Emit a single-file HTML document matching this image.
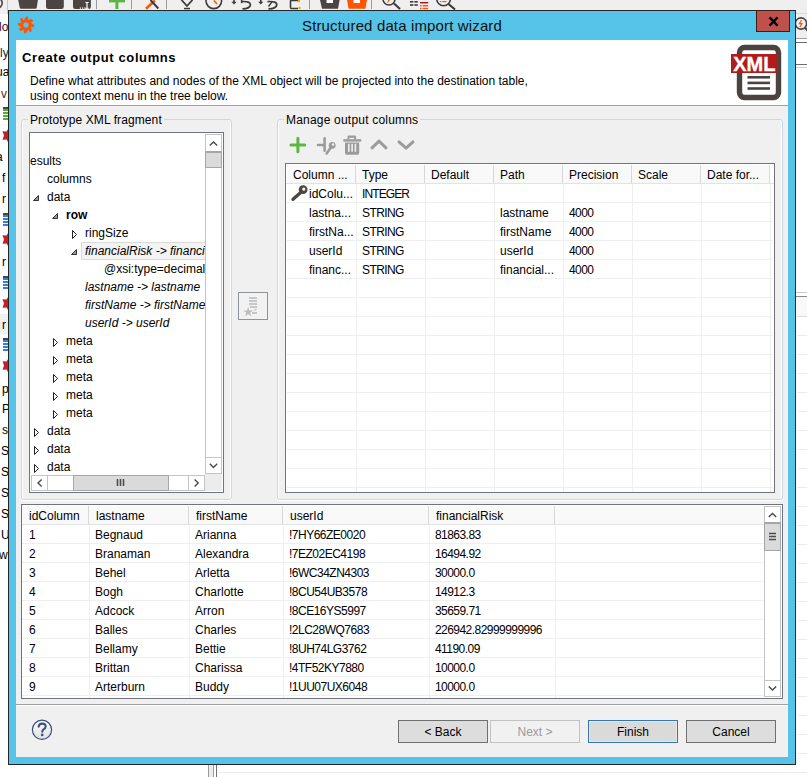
<!DOCTYPE html>
<html><head><meta charset="utf-8">
<style>
*{box-sizing:border-box}
html,body{margin:0;padding:0}
body{width:807px;height:777px;position:relative;overflow:hidden;background:#fff;font-family:"Liberation Sans",sans-serif;font-size:12px;color:#000}
.a{position:absolute}
.t{position:absolute;line-height:18px;white-space:nowrap}
.hl{position:absolute;height:1px}
.vl{position:absolute;width:1px}
</style></head><body>
<!-- background app -->
<div class="a" style="left:0;top:0;width:807px;height:14px;background:#efefef"></div>
<svg class="a" style="left:0;top:0" width="807" height="14">
<circle cx="-3" cy="3" r="5.2" fill="none" stroke="#4b4440" stroke-width="1.6"/>
<rect x="7" y="0" width="1" height="14" fill="#c9c9c9"/>
<path d="M18.2 0H37.9L36.8 7.5Q36.6 8.8 35.3 8.8H21.2Q19.9 8.8 19.7 7.5Z" fill="#4b4440"/>
<path d="M46 0H63.8V6.8Q63.8 9 61.6 9H48.2Q46 9 46 6.8Z" fill="#4b4440"/>
<path d="M73 0H90.9V6.8Q90.9 9 88.7 9H75.2Q73 9 73 6.8Z" fill="#4b4440"/>
<g fill="#fff"><rect x="79.8" y="7.5" width="1.2" height="1.2"/><rect x="82" y="7.5" width="1.2" height="1.2"/><rect x="84.2" y="7.5" width="1.2" height="1.2"/><rect x="86.4" y="2" width="1.2" height="6.5"/><rect x="85.4" y="2" width="3.2" height="1"/><rect x="85.4" y="7.8" width="3.2" height="1"/></g>
<rect x="96" y="0" width="1" height="9" fill="#9a9a9a"/>
<path d="M109 0H125V2.4H109Z" fill="#5cb545"/><rect x="115.4" y="0" width="3" height="9" fill="#5cb545"/>
<rect x="131" y="0" width="1" height="9" fill="#9a9a9a"/>
<path d="M146 8.8L154.8 0.5" stroke="#ff5500" stroke-width="2.6"/><path d="M150.5 0L158.3 8.5" stroke="#3b3b3b" stroke-width="2"/>
<rect x="166" y="0" width="1" height="9" fill="#9a9a9a"/>
<path d="M181.5 0L187 6L192.5 0" fill="none" stroke="#3b3b3b" stroke-width="1.8"/><rect x="184" y="7.8" width="6" height="1.5" fill="#3b3b3b"/>
<circle cx="213.8" cy="0.8" r="7.8" fill="none" stroke="#3b3b3b" stroke-width="1.6"/><path d="M213.8 0.5L217 4" stroke="#ff5500" stroke-width="1.6"/>
<path d="M234 0V2.5" stroke="#3b3b3b" stroke-width="1.6"/><path d="M231.4 1.8H236.6L234 4.6Z" fill="#3b3b3b"/><path d="M241.5 1.6Q250.6 1 250.4 4.8Q250 8.6 242.5 8.8" fill="none" stroke="#3b3b3b" stroke-width="1.7"/><path d="M241.6 0V3.2" stroke="#3b3b3b" stroke-width="1.5"/>
<path d="M260.8 0V2.5" stroke="#3b3b3b" stroke-width="1.6"/><path d="M258.2 1.8H263.4L260.8 4.6Z" fill="#3b3b3b"/><path d="M267.5 1.6Q277 1 276.8 4.8Q276.4 8.6 268.5 8.8" fill="none" stroke="#3b3b3b" stroke-width="1.7"/><path d="M272 1.8L268.5 6.5" stroke="#3b3b3b" stroke-width="1.4"/>
<path d="M298 0.5H291.5Q290.5 0.5 290.5 1.5V7.5Q290.5 8.5 291.5 8.5H298" fill="none" stroke="#3b3b3b" stroke-width="1.6"/><circle cx="299" cy="1" r="1.2" fill="#f0a000"/><circle cx="299.5" cy="8" r="1.2" fill="#f0a000"/>
<rect x="309" y="0" width="1" height="9" fill="#9a9a9a"/>
<path d="M320 0H339.6L338 8.8H322Z" fill="#4b4440"/><rect x="326.5" y="0" width="6.5" height="3" fill="#fff"/>
<path d="M347 0H367L365.4 8.8H348.6Z" fill="#ff5500"/><rect x="353.5" y="0" width="6.5" height="3" fill="#fff"/>
<rect x="371" y="0" width="1" height="9" fill="#9a9a9a"/>
<circle cx="389" cy="-1" r="6" fill="none" stroke="#3b3b3b" stroke-width="1.6"/><path d="M387.5 2.5L390 -1" stroke="#ff5500" stroke-width="1.2"/><path d="M394 3.5L400 9" stroke="#3b3b3b" stroke-width="2.2"/>
<g fill="#3b3b3b"><rect x="410" y="1" width="3.4" height="1.6"/><rect x="414.4" y="1" width="3.4" height="1.6"/><rect x="410" y="4.2" width="3.4" height="1.6"/><rect x="414.4" y="4.2" width="3.4" height="1.6"/></g>
<rect x="420" y="2" width="8.2" height="1.4" fill="#a01010"/><g fill="#ff5500"><rect x="420" y="5" width="1.6" height="1.4"/><rect x="422.6" y="5" width="5.6" height="1.4"/><rect x="420" y="7.8" width="1.6" height="1.4"/><rect x="422.6" y="7.8" width="5.6" height="1.4"/></g>
<circle cx="443.6" cy="-1" r="6.8" fill="none" stroke="#3b3b3b" stroke-width="1.6"/><g fill="#ff5500"><rect x="440" y="1" width="1.4" height="1.2"/><rect x="442.4" y="1" width="4" height="1.2"/></g><path d="M448.5 4L455 9.5" stroke="#3b3b3b" stroke-width="2.2"/>
</svg>
<div class="a" style="left:796px;top:14px;width:11px;height:751px;background:#fff"></div>
<div class="a" style="left:796px;top:13px;width:11px;height:1px;background:#dadada"></div>
<div class="a" style="left:796px;top:14px;width:11px;height:24px;background:#efefef"></div>
<svg class="a" style="left:796px;top:14px" width="11" height="24"><circle cx="5" cy="9.5" r="5.6" fill="#f4f4f4" stroke="#4b4440" stroke-width="1.6"/><path d="M5.7 6L3.3 9.7H5.9L3.9 13.1" fill="none" stroke="#ff5500" stroke-width="1.2"/><path d="M8.8 13.6L12 17" stroke="#4b4440" stroke-width="2.2"/></svg>
<div class="a" style="left:796px;top:38px;width:11px;height:1px;background:#a0a0a0"></div>
<div class="a" style="left:796px;top:42px;width:11px;height:1px;background:#6d6d6d"></div>
<div class="a" style="left:796px;top:64px;width:11px;height:1px;background:#6d6d6d"></div>
<div class="a" style="left:796px;top:67px;width:11px;height:1px;background:#c8d0d8"></div>
<div class="a" style="left:796px;top:292px;width:11px;height:1px;background:#c8c8c8"></div>
<div class="a" style="left:796px;top:296px;width:11px;height:1px;background:#8a8a8a"></div>
<div class="a" style="left:796px;top:297px;width:11px;height:19px;background:#f9f9f9"></div>
<div class="a" style="left:797px;top:316px;width:10px;height:1px;background:#dcdcdc"></div>
<div class="a" style="left:797px;top:335px;width:10px;height:1px;background:#ececec"></div>
<div class="a" style="left:797px;top:354px;width:10px;height:1px;background:#ececec"></div>
<div class="a" style="left:797px;top:373px;width:10px;height:1px;background:#ececec"></div>
<div class="a" style="left:797px;top:392px;width:10px;height:1px;background:#ececec"></div>
<div class="a" style="left:797px;top:411px;width:10px;height:1px;background:#ececec"></div>
<div class="a" style="left:797px;top:430px;width:10px;height:1px;background:#ececec"></div>
<div class="a" style="left:797px;top:449px;width:10px;height:1px;background:#ececec"></div>
<div class="a" style="left:797px;top:468px;width:10px;height:1px;background:#ececec"></div>
<div class="a" style="left:797px;top:487px;width:10px;height:1px;background:#ececec"></div>
<div class="a" style="left:797px;top:506px;width:10px;height:1px;background:#ececec"></div>
<div class="a" style="left:797px;top:525px;width:10px;height:1px;background:#ececec"></div>
<div class="a" style="left:797px;top:544px;width:10px;height:1px;background:#ececec"></div>
<div class="a" style="left:797px;top:563px;width:10px;height:1px;background:#ececec"></div>
<div class="a" style="left:797px;top:582px;width:10px;height:1px;background:#ececec"></div>
<div class="a" style="left:797px;top:601px;width:10px;height:1px;background:#ececec"></div>
<div class="a" style="left:797px;top:620px;width:10px;height:1px;background:#ececec"></div>
<div class="a" style="left:797px;top:639px;width:10px;height:1px;background:#ececec"></div>
<div class="a" style="left:797px;top:658px;width:10px;height:1px;background:#ececec"></div>
<div class="a" style="left:797px;top:677px;width:10px;height:1px;background:#ececec"></div>
<div class="a" style="left:797px;top:696px;width:10px;height:1px;background:#ececec"></div>
<div class="a" style="left:797px;top:715px;width:10px;height:1px;background:#ececec"></div>
<div class="a" style="left:797px;top:734px;width:10px;height:1px;background:#ececec"></div>
<div class="a" style="left:797px;top:753px;width:10px;height:1px;background:#ececec"></div>
<div class="a" style="left:797px;top:772px;width:10px;height:1px;background:#ececec"></div>
<div class="a" style="left:208px;top:765px;width:1px;height:12px;background:#9a9a9a"></div>
<div class="a" style="left:209px;top:765px;width:4px;height:12px;background:#ececec"></div>
<div class="a" style="left:213px;top:765px;width:1px;height:12px;background:#9a9a9a"></div>
<div class="a" style="left:216px;top:765px;width:1px;height:12px;background:#6f737a"></div>
<div class="a" style="left:218px;top:772px;width:589px;height:1px;background:#ececec"></div>
<div class="a" style="left:0;top:314px;width:8px;height:20px;background:#f0f0f0"></div>
<div class="a" style="left:0;top:14px;width:8px;height:751px;overflow:hidden"><div class="t" style="left:-1px;top:4px;color:#3a0a2a">lo</div><div class="t" style="left:0px;top:30px;color:#1a1a4a">ly</div><div class="t" style="left:-4px;top:49px;color:#000">ua</div><div class="t" style="left:1px;top:71px;color:#5a2a00">v</div><div class="t" style="left:-4px;top:134px;color:#000">a</div><div class="t" style="left:2px;top:155px;color:#000">f</div><div class="t" style="left:2px;top:176px;color:#000">r</div><div class="t" style="left:2px;top:239px;color:#000">r</div><div class="t" style="left:2px;top:302px;color:#000">r</div><div class="t" style="left:2px;top:366px;color:#000">p</div><div class="t" style="left:2px;top:386px;color:#000">P</div><div class="t" style="left:2px;top:407px;color:#000">s</div><div class="t" style="left:1px;top:428px;color:#000">S</div><div class="t" style="left:1px;top:449px;color:#000">S</div><div class="t" style="left:1px;top:470px;color:#000">S</div><div class="t" style="left:1px;top:491px;color:#000">S</div><div class="t" style="left:1px;top:512px;color:#000">U</div><div class="t" style="left:-1px;top:532px;color:#000">w</div><div class="a" style="left:3px;top:93px;width:5px;height:1.5px;background:#4b4440"></div><div class="a" style="left:3px;top:95px;width:5px;height:2px;background:#50b030"></div><div class="a" style="left:3px;top:98px;width:5px;height:2px;background:#50b030"></div><div class="a" style="left:3px;top:101px;width:5px;height:2px;background:#50b030"></div><div class="a" style="left:3px;top:104px;width:5px;height:2px;background:#50b030"></div><svg class="a" style="left:0;top:113px" width="8" height="17"><path d="M9 0.5L6.5 4.5L2.5 4.2L4 8.5L2.5 12.8L6.5 12.5L9 16.5Z" fill="#c0202a"/></svg><div class="a" style="left:3px;top:199px;width:5px;height:1.5px;background:#4b4440"></div><div class="a" style="left:3px;top:201px;width:5px;height:2px;background:#3080e0"></div><div class="a" style="left:3px;top:204px;width:5px;height:2px;background:#3080e0"></div><div class="a" style="left:3px;top:207px;width:5px;height:2px;background:#3080e0"></div><div class="a" style="left:3px;top:210px;width:5px;height:2px;background:#3080e0"></div><svg class="a" style="left:0;top:217px" width="8" height="17"><path d="M9 0.5L6.5 4.5L2.5 4.2L4 8.5L2.5 12.8L6.5 12.5L9 16.5Z" fill="#c0202a"/></svg><div class="a" style="left:3px;top:262px;width:5px;height:1.5px;background:#4b4440"></div><div class="a" style="left:3px;top:264px;width:5px;height:2px;background:#3080e0"></div><div class="a" style="left:3px;top:267px;width:5px;height:2px;background:#3080e0"></div><div class="a" style="left:3px;top:270px;width:5px;height:2px;background:#3080e0"></div><div class="a" style="left:3px;top:273px;width:5px;height:2px;background:#3080e0"></div><svg class="a" style="left:0;top:281px" width="8" height="17"><path d="M9 0.5L6.5 4.5L2.5 4.2L4 8.5L2.5 12.8L6.5 12.5L9 16.5Z" fill="#c0202a"/></svg><div class="a" style="left:3px;top:324px;width:5px;height:1.5px;background:#4b4440"></div><div class="a" style="left:3px;top:326px;width:5px;height:2px;background:#3080e0"></div><div class="a" style="left:3px;top:329px;width:5px;height:2px;background:#3080e0"></div><div class="a" style="left:3px;top:332px;width:5px;height:2px;background:#3080e0"></div><div class="a" style="left:3px;top:335px;width:5px;height:2px;background:#3080e0"></div><svg class="a" style="left:0;top:343px" width="8" height="17"><path d="M9 0.5L6.5 4.5L2.5 4.2L4 8.5L2.5 12.8L6.5 12.5L9 16.5Z" fill="#c0202a"/></svg></div>

<!-- dialog -->
<div class="a" style="left:8px;top:10px;width:788px;height:755px;background:#56c3e8;border:1px solid #262626"></div>
<div class="a" style="left:16px;top:40px;width:772px;height:717px;background:#f0f0f0"></div>
<div class="a" style="left:16px;top:40px;width:772px;height:65px;background:#fff"></div>
<div class="hl" style="left:16px;top:105px;width:772px;background:#a0a0a0"></div>

<svg class="a" style="left:16px;top:15px" width="20" height="20" viewBox="-10 -10 20 20"><g stroke="#ff5500" stroke-linecap="round" fill="none"><circle cx="0" cy="0" r="4.2" stroke-width="2.8"/><path d="M-0.94 -4.09L0.85 -6.95M2.23 -3.56L5.52 -4.31M4.09 -0.94L6.95 0.85M3.56 2.23L4.31 5.52M0.94 4.09L-0.85 6.95M-2.23 3.56L-5.52 4.31M-4.09 0.94L-6.95 -0.85M-3.56 -2.23L-4.31 -5.52" stroke-width="2.8"/></g></svg>
<div class="t" style="left:302px;top:17px;font-size:15px;color:#111;letter-spacing:0.14px">Structured data import wizard</div>
<div class="a" style="left:756px;top:10px;width:34px;height:22px;background:#c0504a;border:1px solid #3a1c18"></div>
<svg class="a" style="left:768px;top:16px" width="12" height="11" viewBox="0 0 12 11"><path d="M2.4 2.2L8.8 8.8M8.8 2.2L2.4 8.8" stroke="#000" stroke-width="2.4" stroke-linecap="square"/></svg>

<div class="t" style="left:22px;top:49px;font-size:13px;font-weight:bold;letter-spacing:0.6px">Create output columns</div>
<div class="t" style="left:30px;top:72px">Define what attributes and nodes of the XML object will be projected into the destination table,</div>
<div class="t" style="left:30px;top:87px">using context menu in the tree below.</div>
<svg class="a" style="left:730px;top:44px" width="52" height="58" viewBox="0 0 52 58">
<rect x="9.5" y="3.5" width="39" height="50" rx="5" ry="5" fill="#fff" stroke="#4a4340" stroke-width="5.4"/>
<rect x="17.5" y="32" width="22.5" height="2.6" fill="#4a4340"/>
<rect x="17.5" y="37.6" width="22.5" height="2.6" fill="#4a4340"/>
<rect x="17.5" y="43.2" width="22.5" height="2.6" fill="#4a4340"/>
<rect x="1" y="10" width="47" height="19" fill="#b01c1c"/>
<text x="24.3" y="26.6" text-anchor="middle" font-family="Liberation Sans" font-weight="bold" font-size="20" fill="#fff" stroke="#fff" stroke-width="0.35">XML</text>
</svg>

<div class="a" style="left:21px;top:119px;width:211px;height:381px;border:1px solid #cbd8e3;border-radius:3px;box-shadow:inset 1px 0 #fff,inset -1px 0 #fff,0 1px #fff"></div>
<div class="t" style="left:28px;top:111px;padding:0 2px;background:#f0f0f0;letter-spacing:0.1px">Prototype XML fragment</div>
<div class="a" style="left:29px;top:132px;width:195px;height:361px;border:1px solid #6f737a;background:#fff;overflow:hidden">
<div class="a" style="left:0;top:0;width:175px;height:342px;overflow:hidden">
<div class="a" style="left:51px;top:109px;width:130px;height:18px;background:#f3f3f3;border:1px solid #dadada"></div><div class="t" style="left:-4px;top:19px;">results</div><div class="t" style="left:17px;top:37px;">columns</div><div class="t" style="left:17px;top:55px;">data</div><svg class="a" style="left:2px;top:61px" width="8" height="8"><path d="M6.5 1.5L6.5 6.5L1.5 6.5Z" fill="#999" stroke="#333" stroke-width="1"/></svg><div class="t" style="left:36px;top:73px;font-weight:bold">row</div><svg class="a" style="left:21px;top:79px" width="8" height="8"><path d="M6.5 1.5L6.5 6.5L1.5 6.5Z" fill="#999" stroke="#333" stroke-width="1"/></svg><div class="t" style="left:55px;top:91px;">ringSize</div><svg class="a" style="left:41px;top:96px" width="8" height="11"><path d="M1.5 1.5L1.5 9.5L5.5 5.5Z" fill="#fff" stroke="#222" stroke-width="1"/></svg><div class="t" style="left:55px;top:109px;font-style:italic">financialRisk -&gt; financialRisk</div><svg class="a" style="left:40px;top:115px" width="8" height="8"><path d="M6.5 1.5L6.5 6.5L1.5 6.5Z" fill="#999" stroke="#333" stroke-width="1"/></svg><div class="t" style="left:74px;top:127px;">@xsi:type=decimal</div><div class="t" style="left:55px;top:145px;font-style:italic">lastname -&gt; lastname</div><div class="t" style="left:55px;top:163px;font-style:italic">firstName -&gt; firstName</div><div class="t" style="left:55px;top:181px;font-style:italic">userId -&gt; userId</div><div class="t" style="left:36px;top:199px;">meta</div><svg class="a" style="left:22px;top:204px" width="8" height="11"><path d="M1.5 1.5L1.5 9.5L5.5 5.5Z" fill="#fff" stroke="#222" stroke-width="1"/></svg><div class="t" style="left:36px;top:217px;">meta</div><svg class="a" style="left:22px;top:222px" width="8" height="11"><path d="M1.5 1.5L1.5 9.5L5.5 5.5Z" fill="#fff" stroke="#222" stroke-width="1"/></svg><div class="t" style="left:36px;top:235px;">meta</div><svg class="a" style="left:22px;top:240px" width="8" height="11"><path d="M1.5 1.5L1.5 9.5L5.5 5.5Z" fill="#fff" stroke="#222" stroke-width="1"/></svg><div class="t" style="left:36px;top:253px;">meta</div><svg class="a" style="left:22px;top:258px" width="8" height="11"><path d="M1.5 1.5L1.5 9.5L5.5 5.5Z" fill="#fff" stroke="#222" stroke-width="1"/></svg><div class="t" style="left:36px;top:271px;">meta</div><svg class="a" style="left:22px;top:276px" width="8" height="11"><path d="M1.5 1.5L1.5 9.5L5.5 5.5Z" fill="#fff" stroke="#222" stroke-width="1"/></svg><div class="t" style="left:17px;top:289px;">data</div><svg class="a" style="left:3px;top:294px" width="8" height="11"><path d="M1.5 1.5L1.5 9.5L5.5 5.5Z" fill="#fff" stroke="#222" stroke-width="1"/></svg><div class="t" style="left:17px;top:307px;">data</div><svg class="a" style="left:3px;top:312px" width="8" height="11"><path d="M1.5 1.5L1.5 9.5L5.5 5.5Z" fill="#fff" stroke="#222" stroke-width="1"/></svg><div class="t" style="left:17px;top:325px;">data</div><svg class="a" style="left:3px;top:330px" width="8" height="11"><path d="M1.5 1.5L1.5 9.5L5.5 5.5Z" fill="#fff" stroke="#222" stroke-width="1"/></svg>
</div>
</div>
<!-- v scrollbar -->
<div class="a" style="left:205px;top:134px;width:17px;height:340px;border-left:1px solid #c4c4c4;border-right:1px solid #c4c4c4;background:#fff"></div>
<div class="a" style="left:205px;top:134px;width:17px;height:18px;border:1px solid #c4c4c4;background:#fff"></div>
<svg class="a" style="left:205px;top:134px" width="17" height="18"><path d="M4.8 11.6L8.5 8L12.2 11.6" fill="none" stroke="#4a4a4a" stroke-width="1.4"/></svg>
<div class="a" style="left:205px;top:151px;width:17px;height:17px;border:1px solid #a6a6a6;border-top-width:2px;background:#dadada"></div>
<div class="a" style="left:205px;top:457px;width:17px;height:17px;border:1px solid #c4c4c4;background:#fff"></div>
<svg class="a" style="left:205px;top:457px" width="17" height="17"><path d="M4.8 6.8L8.5 10.4L12.2 6.8" fill="none" stroke="#4a4a4a" stroke-width="1.4"/></svg>
<!-- h scrollbar -->
<div class="a" style="left:31px;top:475px;width:174px;height:16px;border-top:1px solid #c4c4c4;border-bottom:1px solid #c4c4c4;background:#fff"></div>
<div class="a" style="left:31px;top:475px;width:17px;height:16px;border:1px solid #c4c4c4;background:#fff"></div>
<svg class="a" style="left:31px;top:475px" width="17" height="16"><path d="M10.6 4.5L7 8L10.6 11.5" fill="none" stroke="#4a4a4a" stroke-width="1.4"/></svg>
<div class="a" style="left:73px;top:475px;width:96px;height:16px;border:1px solid #a6a6a6;background:#dadada"></div>
<svg class="a" style="left:115px;top:478px" width="12" height="9"><path d="M2.5 1v7M5.5 1v7M8.5 1v7" stroke="#4d4d4d" stroke-width="1.6"/></svg>
<div class="a" style="left:188px;top:475px;width:17px;height:16px;border:1px solid #c4c4c4;background:#fff"></div>
<svg class="a" style="left:188px;top:475px" width="17" height="16"><path d="M6.6 4.5L10.2 8L6.6 11.5" fill="none" stroke="#4a4a4a" stroke-width="1.4"/></svg>
<div class="a" style="left:205px;top:474px;width:17px;height:17px;background:#ececec"></div>
<!-- move button -->
<div class="a" style="left:238px;top:292px;width:30px;height:28px;border:1px solid #8f9498;background:#f2f2f2"></div>
<svg class="a" style="left:238px;top:292px" width="30" height="28"><g fill="#bcbcbc"><rect x="11" y="5.2" width="8" height="1.6"/><rect x="11" y="8.2" width="8" height="1.6"/><rect x="11" y="11.2" width="8" height="1.6"/><rect x="12" y="14.2" width="7" height="1.6"/><rect x="14" y="20.2" width="5" height="1.6"/><path transform="translate(0.6 1.2)" d="M9.6 13.5L10.8 17.2L14.6 17.2L11.5 19.5L12.7 23.2L9.6 20.9L6.5 23.2L7.7 19.5L4.6 17.2L8.4 17.2Z"/><path d="M16.6 18.6L18.4 16.8" stroke="#bcbcbc" stroke-width="1.2"/></g></svg>

<div class="a" style="left:277px;top:119px;width:506px;height:381px;border:1px solid #cbd8e3;border-radius:3px;box-shadow:inset 1px 0 #fff,inset -1px 0 #fff,0 1px #fff"></div>
<div class="t" style="left:284px;top:111px;padding:0 2px;background:#f0f0f0;letter-spacing:0.2px">Manage output columns</div>
<svg class="a" style="left:284px;top:130px" width="140" height="30">
<path d="M7 15H20.8M13.9 8.2V21.8" stroke="#5cb545" stroke-width="3" stroke-linecap="round"/>
<g stroke="#9b9b9b" stroke-width="2.6" stroke-linecap="round" fill="none"><path d="M34 15H40.6M40.6 8.2V20.8"/><path d="M46.8 17.5L42.6 23.4"/></g>
<circle cx="48.2" cy="15.3" r="3.4" fill="#9b9b9b"/><circle cx="49" cy="14.5" r="1.2" fill="#f0f0f0"/>
<g fill="#9b9b9b"><path d="M59.3 9.2h18v2.4h-18z"/><path d="M63.5 9.5v-2.6q0-1.4 1.4-1.4h5.8q1.4 0 1.4 1.4v2.6h-2v-1.8h-4.6v1.8z"/><path d="M61 12.4h14.2v10.6q0 1.8-1.8 1.8h-10.6q-1.8 0-1.8-1.8z"/></g>
<g fill="#f0f0f0"><rect x="64" y="13.8" width="1.6" height="8"/><rect x="67.3" y="13.8" width="1.6" height="8"/><rect x="70.6" y="13.8" width="1.6" height="8"/></g>
<g stroke="#9b9b9b" stroke-width="3" stroke-linecap="round" stroke-linejoin="round" fill="none"><path d="M88 17.8L95 11.2L102 17.8"/><path d="M115 11.9L122 18.2L129 11.9"/></g>
</svg>
<div class="a" style="left:285px;top:163px;width:490px;height:330px;border:1px solid #6f737a;background:#fff;overflow:hidden">
<div class="a" style="left:1px;top:1px;width:68px;height:18px;background:#f9f9f9"></div>
<div class="a" style="left:69px;top:1px;width:1px;height:19px;background:#d8d8d8"></div>
<div class="t" style="left:7px;top:2px">Column ...</div>
<div class="a" style="left:70px;top:1px;width:68px;height:18px;background:#f9f9f9"></div>
<div class="a" style="left:138px;top:1px;width:1px;height:19px;background:#d8d8d8"></div>
<div class="t" style="left:76px;top:2px">Type</div>
<div class="a" style="left:139px;top:1px;width:68px;height:18px;background:#f9f9f9"></div>
<div class="a" style="left:207px;top:1px;width:1px;height:19px;background:#d8d8d8"></div>
<div class="t" style="left:145px;top:2px">Default</div>
<div class="a" style="left:208px;top:1px;width:68px;height:18px;background:#f9f9f9"></div>
<div class="a" style="left:276px;top:1px;width:1px;height:19px;background:#d8d8d8"></div>
<div class="t" style="left:214px;top:2px">Path</div>
<div class="a" style="left:277px;top:1px;width:68px;height:18px;background:#f9f9f9"></div>
<div class="a" style="left:345px;top:1px;width:1px;height:19px;background:#d8d8d8"></div>
<div class="t" style="left:283px;top:2px">Precision</div>
<div class="a" style="left:346px;top:1px;width:68px;height:18px;background:#f9f9f9"></div>
<div class="a" style="left:414px;top:1px;width:1px;height:19px;background:#d8d8d8"></div>
<div class="t" style="left:352px;top:2px">Scale</div>
<div class="a" style="left:415px;top:1px;width:68px;height:18px;background:#f9f9f9"></div>
<div class="a" style="left:483px;top:1px;width:1px;height:19px;background:#d8d8d8"></div>
<div class="t" style="left:421px;top:2px">Date for...</div>
<div class="a" style="left:0;top:19px;width:488px;height:1px;background:#e3e3e3"></div>
<div class="a" style="left:1px;top:38px;width:486px;height:1px;background:#efefef"></div>
<div class="a" style="left:1px;top:57px;width:486px;height:1px;background:#efefef"></div>
<div class="a" style="left:1px;top:76px;width:486px;height:1px;background:#efefef"></div>
<div class="a" style="left:1px;top:95px;width:486px;height:1px;background:#efefef"></div>
<div class="a" style="left:1px;top:114px;width:486px;height:1px;background:#efefef"></div>
<div class="a" style="left:1px;top:133px;width:486px;height:1px;background:#efefef"></div>
<div class="a" style="left:1px;top:152px;width:486px;height:1px;background:#efefef"></div>
<div class="a" style="left:1px;top:171px;width:486px;height:1px;background:#efefef"></div>
<div class="a" style="left:1px;top:190px;width:486px;height:1px;background:#efefef"></div>
<div class="a" style="left:1px;top:209px;width:486px;height:1px;background:#efefef"></div>
<div class="a" style="left:1px;top:228px;width:486px;height:1px;background:#efefef"></div>
<div class="a" style="left:1px;top:247px;width:486px;height:1px;background:#efefef"></div>
<div class="a" style="left:1px;top:266px;width:486px;height:1px;background:#efefef"></div>
<div class="a" style="left:1px;top:285px;width:486px;height:1px;background:#efefef"></div>
<div class="a" style="left:1px;top:304px;width:486px;height:1px;background:#efefef"></div>
<div class="a" style="left:1px;top:323px;width:486px;height:1px;background:#efefef"></div>
<div class="a" style="left:1px;top:342px;width:486px;height:1px;background:#efefef"></div>
<div class="a" style="left:70px;top:20px;width:1px;height:310px;background:#efefef"></div>
<div class="a" style="left:139px;top:20px;width:1px;height:310px;background:#efefef"></div>
<div class="a" style="left:208px;top:20px;width:1px;height:310px;background:#efefef"></div>
<div class="a" style="left:277px;top:20px;width:1px;height:310px;background:#efefef"></div>
<div class="a" style="left:346px;top:20px;width:1px;height:310px;background:#efefef"></div>
<div class="a" style="left:415px;top:20px;width:1px;height:310px;background:#efefef"></div>
<div class="a" style="left:484px;top:20px;width:1px;height:310px;background:#efefef"></div>
<div class="t" style="left:23px;top:21px">idColu...</div>
<div class="t" style="left:76px;top:21px;letter-spacing:-0.9px">INTEGER</div>
<div class="t" style="left:23px;top:40px">lastna...</div>
<div class="t" style="left:76px;top:40px;letter-spacing:-0.6px">STRING</div>
<div class="t" style="left:214px;top:40px">lastname</div>
<div class="t" style="left:283px;top:40px;letter-spacing:-0.6px">4000</div>
<div class="t" style="left:23px;top:59px">firstNa...</div>
<div class="t" style="left:76px;top:59px;letter-spacing:-0.6px">STRING</div>
<div class="t" style="left:214px;top:59px">firstName</div>
<div class="t" style="left:283px;top:59px;letter-spacing:-0.6px">4000</div>
<div class="t" style="left:23px;top:78px">userId</div>
<div class="t" style="left:76px;top:78px;letter-spacing:-0.6px">STRING</div>
<div class="t" style="left:214px;top:78px">userId</div>
<div class="t" style="left:283px;top:78px;letter-spacing:-0.6px">4000</div>
<div class="t" style="left:23px;top:97px">financ...</div>
<div class="t" style="left:76px;top:97px;letter-spacing:-0.6px">STRING</div>
<div class="t" style="left:214px;top:97px">financial...</div>
<div class="t" style="left:283px;top:97px;letter-spacing:-0.6px">4000</div>
<svg class="a" style="left:4px;top:20px" width="19" height="18"><circle cx="13.1" cy="5.7" r="4.4" fill="#4d4542"/><circle cx="13.8" cy="5.1" r="1.6" fill="#fff"/><path d="M10.4 8.8L3 15.3" stroke="#4d4542" stroke-width="3.3" stroke-linecap="round"/></svg>
</div>
<div class="a" style="left:21px;top:504px;width:762px;height:195px;border:1px solid #6f737a;background:#fff;overflow:hidden">
<div class="a" style="left:0;top:1px;width:742px;height:18px;background:#f9f9f9"></div>
<div class="a" style="left:66px;top:1px;width:1px;height:19px;background:#d8d8d8"></div>
<div class="a" style="left:166px;top:1px;width:1px;height:19px;background:#d8d8d8"></div>
<div class="a" style="left:260px;top:1px;width:1px;height:19px;background:#d8d8d8"></div>
<div class="a" style="left:406px;top:1px;width:1px;height:19px;background:#d8d8d8"></div>
<div class="a" style="left:532px;top:1px;width:1px;height:19px;background:#d8d8d8"></div>
<div class="t" style="left:7px;top:2px">idColumn</div>
<div class="t" style="left:74px;top:2px">lastname</div>
<div class="t" style="left:174px;top:2px">firstName</div>
<div class="t" style="left:268px;top:2px">userId</div>
<div class="t" style="left:414px;top:2px">financialRisk</div>
<div class="a" style="left:0;top:19px;width:742px;height:1px;background:#e3e3e3"></div>
<div class="a" style="left:0;top:38px;width:742px;height:1px;background:#efefef"></div>
<div class="a" style="left:0;top:57px;width:742px;height:1px;background:#efefef"></div>
<div class="a" style="left:0;top:76px;width:742px;height:1px;background:#efefef"></div>
<div class="a" style="left:0;top:95px;width:742px;height:1px;background:#efefef"></div>
<div class="a" style="left:0;top:114px;width:742px;height:1px;background:#efefef"></div>
<div class="a" style="left:0;top:133px;width:742px;height:1px;background:#efefef"></div>
<div class="a" style="left:0;top:152px;width:742px;height:1px;background:#efefef"></div>
<div class="a" style="left:0;top:171px;width:742px;height:1px;background:#efefef"></div>
<div class="a" style="left:0;top:190px;width:742px;height:1px;background:#efefef"></div>
<div class="a" style="left:67px;top:20px;width:1px;height:175px;background:#efefef"></div>
<div class="a" style="left:167px;top:20px;width:1px;height:175px;background:#efefef"></div>
<div class="a" style="left:261px;top:20px;width:1px;height:175px;background:#efefef"></div>
<div class="a" style="left:407px;top:20px;width:1px;height:175px;background:#efefef"></div>
<div class="a" style="left:533px;top:20px;width:1px;height:175px;background:#efefef"></div>
<div class="t" style="left:7px;top:21px">1</div>
<div class="t" style="left:73px;top:21px">Begnaud</div>
<div class="t" style="left:173px;top:21px">Arianna</div>
<div class="t" style="left:267px;top:21px;letter-spacing:-0.5px">!7HY66ZE0020</div>
<div class="t" style="left:413px;top:21px;letter-spacing:-0.55px">81863.83</div>
<div class="t" style="left:7px;top:40px">2</div>
<div class="t" style="left:73px;top:40px">Branaman</div>
<div class="t" style="left:173px;top:40px">Alexandra</div>
<div class="t" style="left:267px;top:40px;letter-spacing:-0.5px">!7EZ02EC4198</div>
<div class="t" style="left:413px;top:40px;letter-spacing:-0.55px">16494.92</div>
<div class="t" style="left:7px;top:59px">3</div>
<div class="t" style="left:73px;top:59px">Behel</div>
<div class="t" style="left:173px;top:59px">Arletta</div>
<div class="t" style="left:267px;top:59px;letter-spacing:-0.5px">!6WC34ZN4303</div>
<div class="t" style="left:413px;top:59px;letter-spacing:-0.55px">30000.0</div>
<div class="t" style="left:7px;top:78px">4</div>
<div class="t" style="left:73px;top:78px">Bogh</div>
<div class="t" style="left:173px;top:78px">Charlotte</div>
<div class="t" style="left:267px;top:78px;letter-spacing:-0.5px">!8CU54UB3578</div>
<div class="t" style="left:413px;top:78px;letter-spacing:-0.55px">14912.3</div>
<div class="t" style="left:7px;top:97px">5</div>
<div class="t" style="left:73px;top:97px">Adcock</div>
<div class="t" style="left:173px;top:97px">Arron</div>
<div class="t" style="left:267px;top:97px;letter-spacing:-0.5px">!8CE16YS5997</div>
<div class="t" style="left:413px;top:97px;letter-spacing:-0.55px">35659.71</div>
<div class="t" style="left:7px;top:116px">6</div>
<div class="t" style="left:73px;top:116px">Balles</div>
<div class="t" style="left:173px;top:116px">Charles</div>
<div class="t" style="left:267px;top:116px;letter-spacing:-0.5px">!2LC28WQ7683</div>
<div class="t" style="left:413px;top:116px;letter-spacing:-0.55px">226942.82999999996</div>
<div class="t" style="left:7px;top:135px">7</div>
<div class="t" style="left:73px;top:135px">Bellamy</div>
<div class="t" style="left:173px;top:135px">Bettie</div>
<div class="t" style="left:267px;top:135px;letter-spacing:-0.5px">!8UH74LG3762</div>
<div class="t" style="left:413px;top:135px;letter-spacing:-0.55px">41190.09</div>
<div class="t" style="left:7px;top:154px">8</div>
<div class="t" style="left:73px;top:154px">Brittan</div>
<div class="t" style="left:173px;top:154px">Charissa</div>
<div class="t" style="left:267px;top:154px;letter-spacing:-0.5px">!4TF52KY7880</div>
<div class="t" style="left:413px;top:154px;letter-spacing:-0.55px">10000.0</div>
<div class="t" style="left:7px;top:173px">9</div>
<div class="t" style="left:73px;top:173px">Arterburn</div>
<div class="t" style="left:173px;top:173px">Buddy</div>
<div class="t" style="left:267px;top:173px;letter-spacing:-0.5px">!1UU07UX6048</div>
<div class="t" style="left:413px;top:173px;letter-spacing:-0.55px">10000.0</div>
</div>
<div class="a" style="left:764px;top:506px;width:17px;height:191px;border-left:1px solid #c4c4c4;border-right:1px solid #c4c4c4;background:#fff"></div>
<div class="a" style="left:764px;top:506px;width:17px;height:17px;border:1px solid #c4c4c4;background:#fff"></div>
<svg class="a" style="left:764px;top:506px" width="17" height="17"><path d="M4.8 11.1L8.5 7.5L12.2 11.1" fill="none" stroke="#4a4a4a" stroke-width="1.4"/></svg>
<div class="a" style="left:764px;top:522px;width:17px;height:29px;border:1px solid #a6a6a6;border-top-width:2px;background:#dadada"></div>
<svg class="a" style="left:764px;top:522px" width="17" height="29"><path d="M5 11.5h7M5 14.5h7M5 17.5h7" stroke="#4d4d4d" stroke-width="1.5"/></svg>
<div class="a" style="left:764px;top:680px;width:17px;height:17px;border:1px solid #c4c4c4;background:#fff"></div>
<svg class="a" style="left:764px;top:680px" width="17" height="17"><path d="M4.8 6.5L8.5 10.1L12.2 6.5" fill="none" stroke="#4a4a4a" stroke-width="1.4"/></svg>
<div class="hl" style="left:16px;top:704px;width:772px;background:#a0a0a0"></div>
<div class="hl" style="left:16px;top:705px;width:772px;background:#fff"></div>
<svg class="a" style="left:30px;top:718px" width="24" height="24" viewBox="0 0 24 24"><defs><linearGradient id="hg" x1="0" y1="0" x2="0" y2="1"><stop offset="0" stop-color="#fafafa"/><stop offset="1" stop-color="#e2e2e2"/></linearGradient></defs>
<circle cx="12" cy="11.8" r="9.6" fill="url(#hg)" stroke="#3d5080" stroke-width="1.2"/>
<path d="M8.6 8.6q0.4-3 3.6-3q3.6 0 3.4 3q-0.2 1.8-2 2.8q-1.3 0.8-1.3 2.4" fill="none" stroke="#3d5080" stroke-width="2.1" stroke-linecap="round"/>
<circle cx="12.2" cy="16.9" r="1.3" fill="#3d5080"/></svg>
<div class="a" style="left:398px;top:720px;width:90px;height:23px;border:1px solid #707070;background:#dddddd"></div>
<div class="t" style="left:398px;top:723px;width:90px;text-align:center">&lt; Back</div>
<div class="a" style="left:490px;top:720px;width:90px;height:23px;border:1px solid #c2c2c2;background:#f1f1f1"></div>
<div class="t" style="left:490px;top:723px;width:90px;text-align:center;color:#9a9a9a">Next &gt;</div>
<div class="a" style="left:588px;top:720px;width:90px;height:23px;border:1px solid #3376b4;background:#dadada;box-shadow:inset 0 0 0 1px #ece6e2"></div>
<div class="t" style="left:588px;top:723px;width:90px;text-align:center">Finish</div>
<div class="a" style="left:686px;top:720px;width:90px;height:23px;border:1px solid #707070;background:#dddddd"></div>
<div class="t" style="left:686px;top:723px;width:90px;text-align:center">Cancel</div>

</body></html>
